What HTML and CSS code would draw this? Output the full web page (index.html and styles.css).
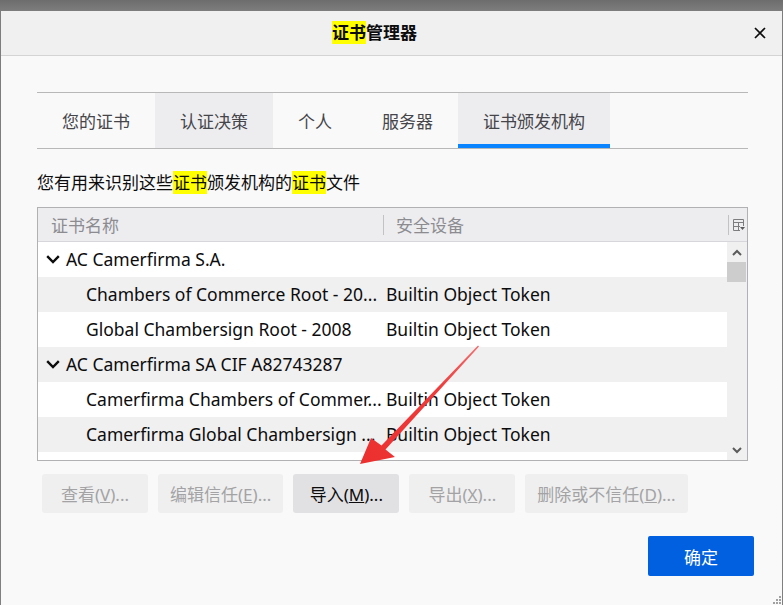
FILE: index.html
```html
<!DOCTYPE html>
<html lang="zh-CN">
<head>
<meta charset="utf-8">
<title>证书管理器</title>
<link rel="stylesheet" href="styles.css">
</head>
<body>
<div class="dialog">
  <div class="titlebar">
    <div class="title"><span class="hl">证书</span>管理器</div>
    <div class="close">
      <svg width="12" height="12" viewBox="0 0 12 12"><path d="M1 1L11 11M11 1L1 11" stroke="#0c0c0d" stroke-width="1.7" fill="none"/></svg>
    </div>
  </div>
  <div class="content">
    <div class="tabs">
      <div class="tab">您的证书</div>
      <div class="tab hover">认证决策</div>
      <div class="tab">个人</div>
      <div class="tab">服务器</div>
      <div class="tab selected">证书颁发机构</div>
    </div>
    <p class="desc">您有用来识别这些<span class="hl">证书</span>颁发机构的<span class="hl">证书</span>文件</p>
    <div class="tree">
      <div class="tree-head">
        <div class="hc1">证书名称</div>
        <div class="sep"></div>
        <div class="hc2">安全设备</div>
        <div class="sep"></div>
        <div class="picker">
          <svg width="12" height="12" viewBox="0 0 12 12"><path d="M0.5 0.5H10.5V7M0.5 0.5V11.5H7M0.5 3.5H10.5M5.5 3.5V11.5M0.5 7.5H7" stroke="#7d7d80" stroke-width="1" fill="none"/><path d="M7 8H12L9.5 11Z" fill="#5a5a5d"/></svg>
        </div>
      </div>
      <div class="tree-body">
        <div class="rows">
          <div class="row group"><div class="c1"><svg class="chev" width="14" height="9" viewBox="0 0 14 9"><path d="M1.2 1.2L7 7L12.8 1.2" stroke="#0c0c0d" stroke-width="2.4" fill="none"/></svg>AC Camerfirma S.A.</div><div class="c2"></div></div>
          <div class="row child"><div class="c1">Chambers of Commerce Root - 20...</div><div class="c2">Builtin Object Token</div></div>
          <div class="row child"><div class="c1">Global Chambersign Root - 2008</div><div class="c2">Builtin Object Token</div></div>
          <div class="row group"><div class="c1"><svg class="chev" width="14" height="9" viewBox="0 0 14 9"><path d="M1.2 1.2L7 7L12.8 1.2" stroke="#0c0c0d" stroke-width="2.4" fill="none"/></svg>AC Camerfirma SA CIF A82743287</div><div class="c2"></div></div>
          <div class="row child"><div class="c1">Camerfirma Chambers of Commer...</div><div class="c2">Builtin Object Token</div></div>
          <div class="row child"><div class="c1">Camerfirma Global Chambersign ...</div><div class="c2">Builtin Object Token</div></div>
        </div>
        <div class="scroll">
          <div class="sbtn"><svg width="10" height="7" viewBox="0 0 10 7"><path d="M1 6L5 2L9 6" stroke="#5b5b5b" stroke-width="2" fill="none"/></svg></div>
          <div class="thumb"></div>
          <div class="track"></div>
          <div class="sbtn"><svg width="10" height="7" viewBox="0 0 10 7"><path d="M1 1L5 5L9 1" stroke="#5b5b5b" stroke-width="2" fill="none"/></svg></div>
        </div>
      </div>
    </div>
    <div class="actions">
      <button class="btn">查看(<u>V</u>)...</button>
      <button class="btn">编辑信任(<u>E</u>)...</button>
      <button class="btn active">导入(<u>M</u>)...</button>
      <button class="btn">导出(<u>X</u>)...</button>
      <button class="btn">删除或不信任(<u>D</u>)...</button>
    </div>
  </div>
  <div class="footer">
    <button class="ok">确定</button>
  </div>
  <svg class="grip" width="9" height="9" viewBox="0 0 9 9"><g fill="#a0a0a0"><rect x="7" y="1" width="2" height="2"/><rect x="4" y="4" width="2" height="2"/><rect x="7" y="4" width="2" height="2"/><rect x="1" y="7" width="2" height="2"/><rect x="4" y="7" width="2" height="2"/><rect x="7" y="7" width="2" height="2"/></g></svg>
</div>
<svg class="annot" width="783" height="605" viewBox="0 0 783 605">
  <defs>
    <linearGradient id="ag" x1="478" y1="346" x2="360" y2="464" gradientUnits="userSpaceOnUse">
      <stop offset="0" stop-color="#f56a6a"/>
      <stop offset="0.35" stop-color="#ef3b3b"/>
      <stop offset="1" stop-color="#ec2f2f"/>
    </linearGradient>
  </defs>
  <polygon points="478,345.6 479,346.6 385.5,449.5 395,457 360,464 371,438 381.5,445.5" fill="url(#ag)"/>
</svg>
</body>
</html>
```
FILE: styles.css
```css
* { box-sizing: border-box; }
html, body { margin: 0; height: 100%; }
body {
  background: linear-gradient(#6d6d6d, #7d7d7d 11px, #808080);
  font-family: "Noto Sans", "Noto Sans CJK SC", sans-serif;
  color: #0c0c0d;
  position: relative;
  overflow: hidden;
}
.dialog {
  position: relative;
  margin: 11px 0 0 1px;
  width: 781px;
  height: 594px;
  background: #f9f9f9;
  display: flex;
  flex-direction: column;
}
.titlebar {
  height: 45px;
  background: #f0f0f0;
  border-bottom: 1px solid #d4d4d4;
  display: flex;
  align-items: center;
}
.title {
  flex: 1;
  text-align: center;
  font-size: 17px;
  font-weight: bold;
  line-height: 22px;
}
.hl { background: #ffff00; }
.close {
  width: 34px;
  padding-left: 6px;
  display: flex;
  align-items: center;
}
.content {
  padding: 36px 34px 0 36px;
}
.tabs {
  display: flex;
  height: 57px;
  border-top: 1px solid #b8b8b8;
  border-bottom: 1px solid #b8b8b8;
}
.tab {
  position: relative;
  padding: 0 25px;
  display: flex;
  align-items: center;
  font-size: 17px;
  color: #45454a;
}
.tab.hover, .tab.selected { background: #ededf0; }
.tab.selected::after {
  content: "";
  position: absolute;
  left: 0;
  right: 0;
  bottom: 0;
  height: 4px;
  background: #0a84ff;
}
.desc {
  margin: 22px 0 12px;
  font-size: 17px;
  line-height: 24px;
}
.tree {
  height: 254px;
  border: 1px solid #b1b1b3;
  display: flex;
  flex-direction: column;
  background: #fff;
}
.tree-head {
  height: 34px;
  flex: none;
  background: #ededf0;
  border-bottom: 1px solid #d7d7db;
  display: flex;
  align-items: center;
  font-size: 17px;
  color: #8c8c90;
}
.hc1 { width: 345px; padding-left: 13px; }
.hc2 { width: 344px; padding-left: 12px; }
.sep { width: 1px; height: 20px; background: #c2c2c4; }
.picker { flex: 1; display: flex; align-items: center; padding-left: 4px; }
.tree-body {
  flex: 1;
  display: flex;
  min-height: 0;
}
.rows { flex: 1; }
.row {
  height: 35px;
  display: flex;
  align-items: center;
  font-size: 17.5px;
  line-height: 22px;
  padding-bottom: 1px;
  white-space: nowrap;
}
.row:nth-child(even) { background: #f0f0f0; }
.c1 {
  width: 347px;
  overflow: hidden;
  text-overflow: ellipsis;
  display: flex;
  align-items: center;
}
.group .c1 { padding-left: 8px; }
.chev { margin-right: 6px; flex: none; }
.child .c1 { padding-left: 48px; display: block; }
.c2 { padding-left: 1px; }
.scroll {
  width: 20px;
  background: #f0f0f0;
  display: flex;
  flex-direction: column;
}
.sbtn { height: 20px; display: flex; align-items: center; justify-content: center; }
.thumb { height: 20px; width: 19px; background: #cdcdcd; }
.track { flex: 1; }
.actions {
  display: flex;
  margin-top: 13px;
}
.btn {
  height: 39px;
  min-width: 106px;
  margin: 0 5px;
  padding: 0 12px;
  border: none;
  border-radius: 3px;
  background: #efefef;
  color: #a3a3a5;
  font-family: inherit;
  font-size: 17px;
}
.btn.active { background: #e1e1e3; color: #0c0c0d; }
.footer {
  display: flex;
  justify-content: flex-end;
  padding-right: 28px;
  margin-top: 23px;
}
.ok {
  width: 106px;
  height: 40px;
  border: none;
  border-radius: 2px;
  background: #0060df;
  color: #fff;
  font-family: inherit;
  font-size: 17px;
}
.grip { position: absolute; right: 1px; bottom: 1px; }
.annot { position: absolute; left: 0; top: 0; pointer-events: none; }
```
